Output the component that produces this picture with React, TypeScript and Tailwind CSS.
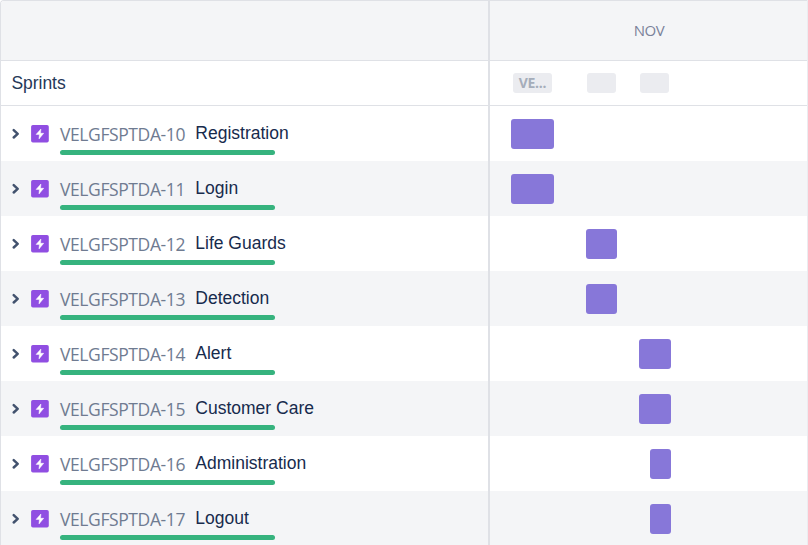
import React from "react";

type Epic = { id: string; name: string; bar: string };

const epics: Epic[] = [
  { id: "VELGFSPTDA-10", name: "Registration", bar: "ml-[21.4px] w-[42.3px]" },
  { id: "VELGFSPTDA-11", name: "Login", bar: "ml-[21.4px] w-[42.3px]" },
  { id: "VELGFSPTDA-12", name: "Life Guards", bar: "ml-[95.8px] w-[31.6px]" },
  { id: "VELGFSPTDA-13", name: "Detection", bar: "ml-[95.8px] w-[31.6px]" },
  { id: "VELGFSPTDA-14", name: "Alert", bar: "ml-[149px] w-[31.6px]" },
  { id: "VELGFSPTDA-15", name: "Customer Care", bar: "ml-[149px] w-[31.6px]" },
  { id: "VELGFSPTDA-16", name: "Administration", bar: "ml-[159.5px] w-[21px]" },
  { id: "VELGFSPTDA-17", name: "Logout", bar: "ml-[159.5px] w-[21px]" },
];

function Chevron() {
  return (
    <svg className="ml-[10px] mt-[22px] h-[12px] w-[9px] shrink-0" viewBox="0 0 9 12" fill="none">
      <path d="M2.7 2.1 6.7 5.8 2.7 9.5" stroke="#42526e" strokeWidth="2.5" strokeLinecap="round" strokeLinejoin="round" />
    </svg>
  );
}

function EpicIcon() {
  return (
    <svg className="ml-[11px] mt-[19px] h-[18px] w-[18px] shrink-0" viewBox="0 0 18 18">
      <rect x="0.1" y="0" width="17.7" height="17.6" rx="1.8" fill="#904ee2" />
      <path d="M9.9 4 5.1 9.4h3.3L8 13.9 12.7 8.3H9.5z" fill="#fff" stroke="#fff" strokeWidth="0.5" strokeLinejoin="round" />
    </svg>
  );
}

function EpicRow({ epic, shaded }: { epic: Epic; shaded: boolean }) {
  return (
    <div className={`flex h-[55px] shrink-0 ${shaded ? "bg-[#f4f5f7]" : "bg-white"}`}>
      <div className="flex w-[487px] shrink-0">
        <Chevron />
        <EpicIcon />
        <div className="ml-[11px] flex flex-col">
          <div className="flex h-[44px]">
            <span className="mt-[16px] w-[135.3px] whitespace-nowrap font-['Open_Sans','Noto_Sans',sans-serif] text-[17.5px] leading-[24px] tracking-[-0.4px] text-[#6f7b91]">
              {epic.id}
            </span>
            <span className="mt-[15px] whitespace-nowrap text-[17.5px] leading-[24px] text-[#172b4d]">{epic.name}</span>
          </div>
          <div className="h-[5px] w-[214.7px] rounded-full bg-[#36b37e]" />
        </div>
      </div>
      <div className="w-[2px] shrink-0 bg-[#dfe1e6]" />
      <div className="flex flex-1">
        <div className={`mt-[13px] h-[29.7px] rounded-[3px] bg-[#8777d9] ${epic.bar}`} />
      </div>
    </div>
  );
}

export default function App() {
  return (
    <div className="h-[545px] w-[808px] overflow-hidden bg-white font-['Liberation_Sans',Arial,sans-serif]">
      <div className="flex h-[545px] flex-col overflow-hidden rounded-tl-[4px] border-t border-r border-l border-t-[#dfe1e6] border-r-[#ebecf0] border-l-[#dfe1e6]">
        <header className="flex h-[60px] shrink-0 bg-[#f4f5f7]">
          <div className="w-[487px] border-b border-[#dfe1e6]" />
          <div className="w-[2px] bg-[#dfe1e6]" />
          <div className="flex flex-1 justify-center border-b border-[#dfe1e6] pt-[19px] pl-[1px] font-['Open_Sans','Noto_Sans',sans-serif] text-[15px] leading-[20px] tracking-[-0.4px] text-[#7a829a]">
            NOV
          </div>
        </header>
        <div className="flex h-[45px] shrink-0">
          <div className="w-[487px] border-b border-[#dfe1e6] pt-[10px] pl-[10.5px] text-[17.5px] leading-[24px] tracking-[-0.05px] text-[#253858]">
            Sprints
          </div>
          <div className="w-[2px] bg-[#dfe1e6]" />
          <div className="flex flex-1 border-b border-[#dfe1e6] pt-[12px]">
            <div className="ml-[22.7px] h-[20px] w-[39.6px] rounded-[3px] bg-[#ebecf0] pl-[6px] font-['Open_Sans','Noto_Sans',sans-serif] text-[14px] leading-[20px] font-bold tracking-[-0.3px] text-[#a5adba]">
              VE...
            </div>
            <div className="ml-[34.6px] h-[20px] w-[29.3px] rounded-[3px] bg-[#ebecf0]" />
            <div className="ml-[24px] h-[20px] w-[29.3px] rounded-[3px] bg-[#ebecf0]" />
          </div>
        </div>
        {epics.map((epic, i) => (
          <EpicRow key={epic.id} epic={epic} shaded={i % 2 === 1} />
        ))}
      </div>
    </div>
  );
}
